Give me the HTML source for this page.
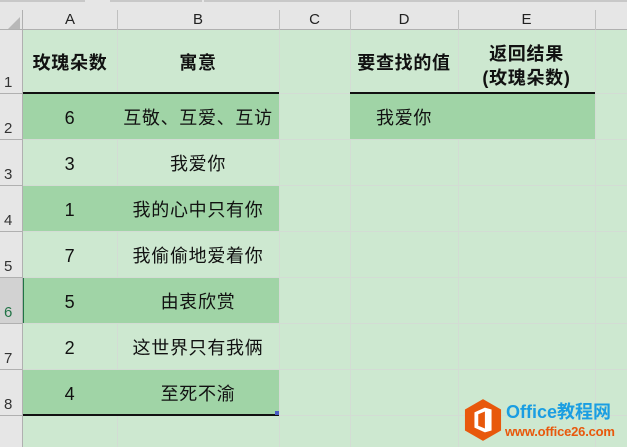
<!DOCTYPE html>
<html><head><meta charset="utf-8"><style>
*{margin:0;padding:0;box-sizing:border-box}
body{width:627px;height:447px;overflow:hidden;background:#cde8d0;position:relative;font-family:"Liberation Sans","Noto Sans CJK SC",sans-serif;color:#111}
.a{position:absolute}
.vl{position:absolute;width:1px;background:#d3dcd4}
.hl{position:absolute;height:1px;background:#d3dcd4}
.t{position:absolute;font-size:18px;letter-spacing:0.7px;text-align:center;white-space:nowrap;line-height:22px}
.rh{position:absolute;left:4px;font-size:15px;color:#333}
.ch{position:absolute;top:11px;font-size:15px;color:#222;text-align:center}
</style></head><body>
<div class="a" style="left:0;top:0;width:627px;height:30px;background:#e6e6e6"></div>
<div class="a" style="left:0;top:0;width:85px;height:2px;background:#c8c8c8"></div>
<div class="a" style="left:110px;top:0;width:92px;height:2px;background:#c8c8c8"></div>
<div class="a" style="left:204px;top:0;width:423px;height:2px;background:#c8c8c8"></div>
<div class="a" style="left:0;top:30px;width:23px;height:417px;background:#e6e6e6"></div>
<div class="a" style="left:0;top:277px;width:23px;height:46px;background:#d2d2d2"></div>
<div class="a" style="left:22px;top:277px;width:2px;height:46px;background:#217346"></div>
<div class="a" style="left:0;top:29px;width:627px;height:1px;background:#b0b0b0"></div>
<div class="a" style="left:22px;top:10px;width:1px;height:437px;background:#b0b0b0"></div>
<svg class="a" style="left:8px;top:17px" width="12" height="12"><polygon points="12,0 12,12 0,12" fill="#b8b8b8"/></svg>
<div class="a" style="left:117px;top:10px;width:1px;height:20px;background:#c0c0c0"></div>
<div class="a" style="left:279px;top:10px;width:1px;height:20px;background:#c0c0c0"></div>
<div class="a" style="left:350px;top:10px;width:1px;height:20px;background:#c0c0c0"></div>
<div class="a" style="left:458px;top:10px;width:1px;height:20px;background:#c0c0c0"></div>
<div class="a" style="left:595px;top:10px;width:1px;height:20px;background:#c0c0c0"></div>
<div class="ch" style="left:23px;width:94px">A</div>
<div class="ch" style="left:117px;width:162px">B</div>
<div class="ch" style="left:279px;width:71px">C</div>
<div class="ch" style="left:350px;width:108px">D</div>
<div class="ch" style="left:458px;width:137px">E</div>
<div class="a" style="left:0;top:93px;width:23px;height:1px;background:#b0b0b0"></div>
<div class="a" style="left:0;top:139px;width:23px;height:1px;background:#b0b0b0"></div>
<div class="a" style="left:0;top:185px;width:23px;height:1px;background:#b0b0b0"></div>
<div class="a" style="left:0;top:231px;width:23px;height:1px;background:#b0b0b0"></div>
<div class="a" style="left:0;top:277px;width:23px;height:1px;background:#b0b0b0"></div>
<div class="a" style="left:0;top:323px;width:23px;height:1px;background:#b0b0b0"></div>
<div class="a" style="left:0;top:369px;width:23px;height:1px;background:#b0b0b0"></div>
<div class="a" style="left:0;top:415px;width:23px;height:1px;background:#b0b0b0"></div>
<div class="rh" style="top:74px">1</div>
<div class="rh" style="top:120px">2</div>
<div class="rh" style="top:166px">3</div>
<div class="rh" style="top:212px">4</div>
<div class="rh" style="top:258px">5</div>
<div class="rh" style="top:304px;color:#217346">6</div>
<div class="rh" style="top:350px">7</div>
<div class="rh" style="top:396px">8</div>
<div class="vl" style="left:117px;top:30px;height:417px"></div>
<div class="vl" style="left:279px;top:30px;height:417px"></div>
<div class="vl" style="left:350px;top:30px;height:417px"></div>
<div class="vl" style="left:458px;top:30px;height:417px"></div>
<div class="vl" style="left:595px;top:30px;height:417px"></div>
<div class="hl" style="left:23px;top:93px;width:604px"></div>
<div class="hl" style="left:23px;top:139px;width:604px"></div>
<div class="hl" style="left:23px;top:185px;width:604px"></div>
<div class="hl" style="left:23px;top:231px;width:604px"></div>
<div class="hl" style="left:23px;top:277px;width:604px"></div>
<div class="hl" style="left:23px;top:323px;width:604px"></div>
<div class="hl" style="left:23px;top:369px;width:604px"></div>
<div class="hl" style="left:23px;top:415px;width:604px"></div>
<div class="a" style="left:23px;top:94px;width:256px;height:45px;background:#a0d4a6"></div>
<div class="a" style="left:350px;top:94px;width:245px;height:45px;background:#a0d4a6"></div>
<div class="a" style="left:23px;top:186px;width:256px;height:45px;background:#a0d4a6"></div>
<div class="a" style="left:24px;top:278px;width:255px;height:45px;background:#a0d4a6"></div>
<div class="a" style="left:23px;top:370px;width:256px;height:45px;background:#a0d4a6"></div>
<div class="a" style="left:23px;top:92px;width:256px;height:2px;background:#111"></div>
<div class="a" style="left:350px;top:92px;width:245px;height:2px;background:#111"></div>
<div class="a" style="left:23px;top:414px;width:256px;height:2px;background:#111"></div>
<div class="a" style="left:275px;top:411px;width:4px;height:4px;background:#4a5bc4"></div>
<div class="t" style="left:23px;width:94px;top:52px;font-weight:bold">玫瑰朵数</div>
<div class="t" style="left:117px;width:162px;top:52px;font-weight:bold">寓意</div>
<div class="t" style="left:350px;width:108px;top:52px;font-weight:bold">要查找的值</div>
<div class="t" style="left:458px;width:137px;top:42px;font-weight:bold;line-height:24px">返回结果<br>(玫瑰朵数)</div>
<div class="t" style="left:23px;width:94px;top:107px">6</div>
<div class="t" style="left:117px;width:162px;top:107px">互敬、互爱、互访</div>
<div class="t" style="left:350px;width:108px;top:107px;text-align:left;padding-left:26px">我爱你</div>
<div class="t" style="left:23px;width:94px;top:153px">3</div>
<div class="t" style="left:117px;width:162px;top:153px">我爱你</div>
<div class="t" style="left:23px;width:94px;top:199px">1</div>
<div class="t" style="left:117px;width:162px;top:199px">我的心中只有你</div>
<div class="t" style="left:23px;width:94px;top:245px">7</div>
<div class="t" style="left:117px;width:162px;top:245px">我偷偷地爱着你</div>
<div class="t" style="left:23px;width:94px;top:291px">5</div>
<div class="t" style="left:117px;width:162px;top:291px">由衷欣赏</div>
<div class="t" style="left:23px;width:94px;top:337px">2</div>
<div class="t" style="left:117px;width:162px;top:337px">这世界只有我俩</div>
<div class="t" style="left:23px;width:94px;top:383px">4</div>
<div class="t" style="left:117px;width:162px;top:383px">至死不渝</div>
<svg class="a" style="left:464px;top:399px" width="38" height="42" viewBox="0 0 40 44">
<polygon points="20,0 39,11 39,33 20,44 1,33 1,11" fill="#e8580c"/>
<path d="M11,14 L22,9 L29,11 L29,33 L22,35 L11,30 Z" fill="#fff"/>
<path d="M15,16 L22,13 L22,31 L15,28 Z" fill="#e8580c"/>
</svg>
<div class="a" style="left:506px;top:401px;font-size:18px;font-weight:bold;color:#1a9ee2;line-height:22px;white-space:nowrap">Office教程网</div>
<div class="a" style="left:505px;top:424px;font-size:13px;font-weight:bold;color:#e8580c;line-height:16px;white-space:nowrap;letter-spacing:-0.2px">www.office26.com</div>
</body></html>
